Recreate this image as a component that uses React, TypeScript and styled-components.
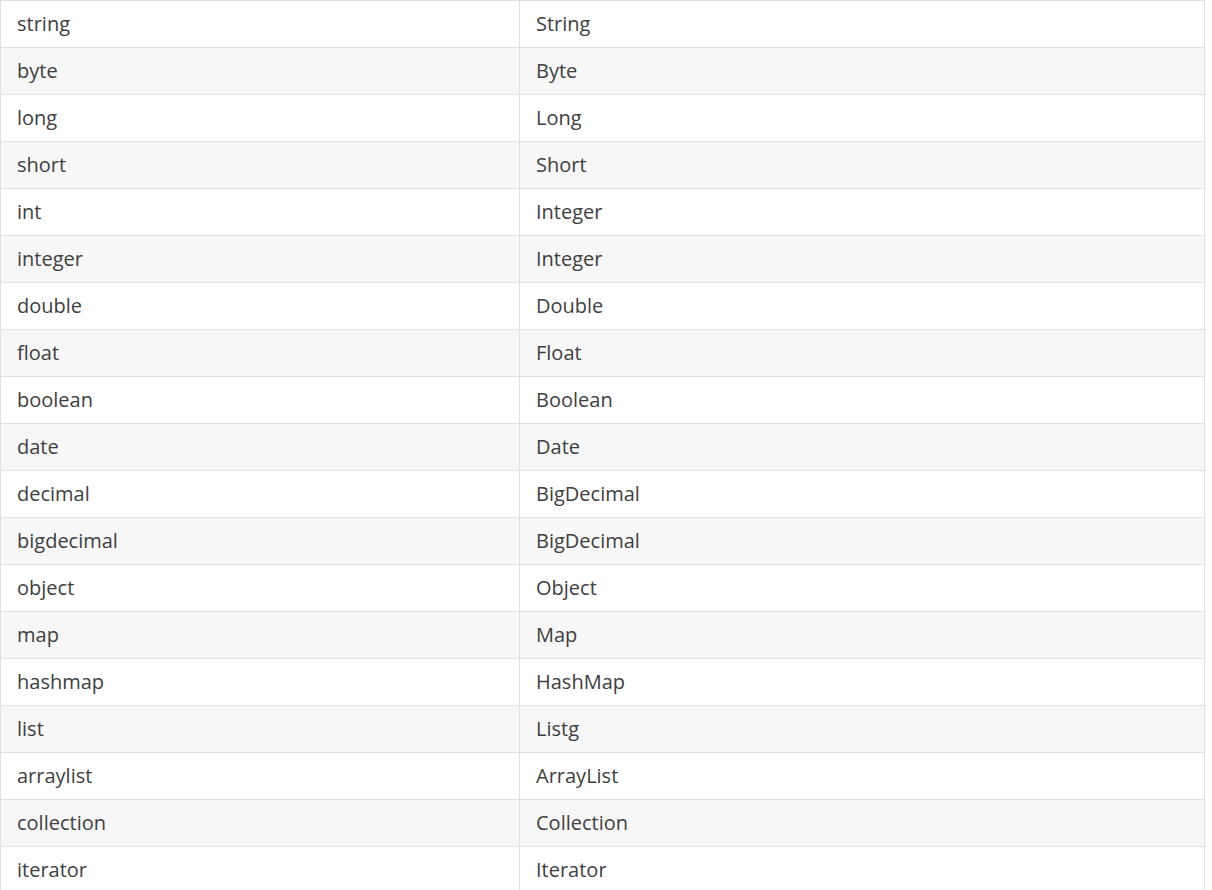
import React from "react";
import styled, { createGlobalStyle } from "styled-components";

const Global = createGlobalStyle`
  html, body { margin: 0; padding: 0; background: #fff; }
  body { font-family: "Open Sans", "Liberation Sans", sans-serif; }
`;

const Table = styled.table`
  border-collapse: collapse;
  width: 1205px;
  font-family: "Open Sans", "Liberation Sans", sans-serif;
  font-size: 20px;
  color: #404040;
`;

const Row = styled.tr<{ $alt: boolean }>`
  background: ${(p) => (p.$alt ? "#f7f7f7" : "#fff")};
`;

const Cell = styled.td<{ $w?: number }>`
  border: 1px solid #dfe2e5;
  padding: 10px 16px;
  line-height: 26px;
  height: 26px;
  ${(p) => (p.$w ? `width: ${p.$w}px;` : "")}
  box-sizing: content-box;
  white-space: nowrap;
`;

const rows: [string, string][] = [
  ["string", "String"],
  ["byte", "Byte"],
  ["long", "Long"],
  ["short", "Short"],
  ["int", "Integer"],
  ["integer", "Integer"],
  ["double", "Double"],
  ["float", "Float"],
  ["boolean", "Boolean"],
  ["date", "Date"],
  ["decimal", "BigDecimal"],
  ["bigdecimal", "BigDecimal"],
  ["object", "Object"],
  ["map", "Map"],
  ["hashmap", "HashMap"],
  ["list", "Listg"],
  ["arraylist", "ArrayList"],
  ["collection", "Collection"],
  ["iterator", "Iterator"],
];

export default function App() {
  return (
    <>
      <Global />
      <Table>
        <tbody>
          {rows.map(([a, b], i) => (
            <Row key={i} $alt={i % 2 === 1}>
              <Cell $w={486}>{a}</Cell>
              <Cell>{b}</Cell>
            </Row>
          ))}
        </tbody>
      </Table>
    </>
  );
}
